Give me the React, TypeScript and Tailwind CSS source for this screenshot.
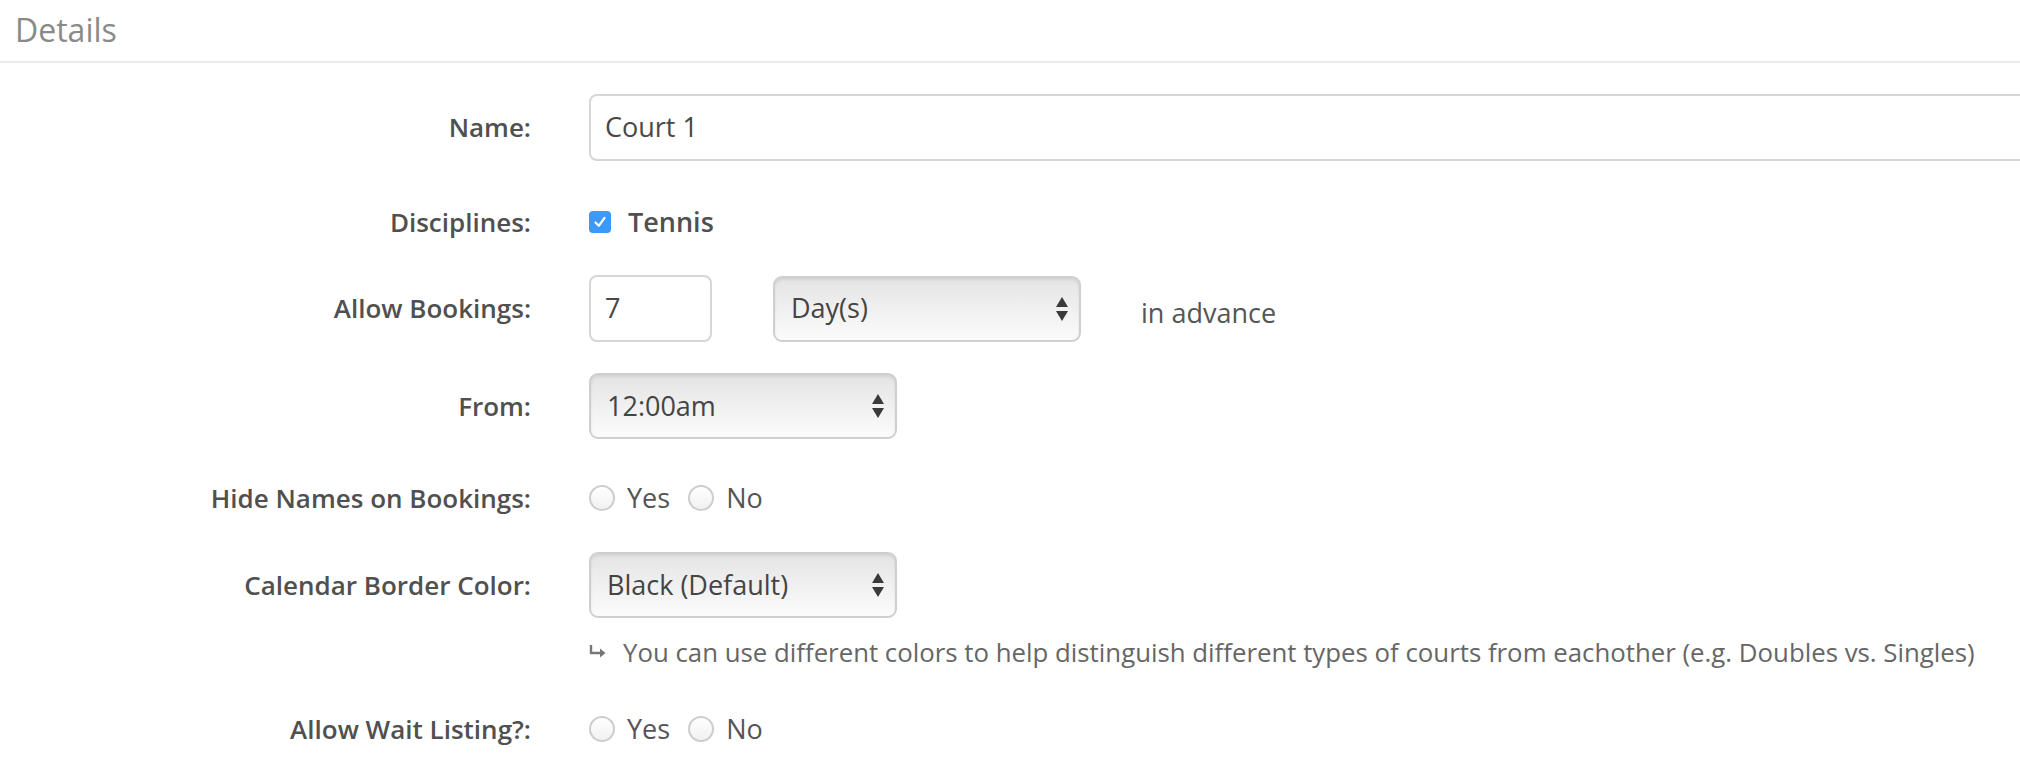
import React from "react";

const font = { fontFamily: '"Open Sans", "Liberation Sans", sans-serif' };

function Arrows() {
  return (
    <svg width="14" height="28" viewBox="0 0 14 28" className="shrink-0">
      <path d="M7 2 L13 12 L1 12 Z" fill="#3a3a3a" />
      <path d="M7 26 L13 16 L1 16 Z" fill="#3a3a3a" />
    </svg>
  );
}

function Select({ value, w }: { value: string; w: string }) {
  return (
    <div
      className={`${w} h-[66px] rounded-[9px] border-2 border-[#cfcfcf] bg-gradient-to-b from-[#e4e4e4] via-[#f0f0f0] to-[#fbfbfb] shadow-[inset_0_2px_3px_rgba(0,0,0,0.08)] flex items-center justify-between pl-[16px] pr-[10px] text-[27px] text-[#444]`}
    >
      <span>{value}</span>
      <Arrows />
    </div>
  );
}

function Radio({ label }: { label: string }) {
  return (
    <div className="flex items-center gap-[12px]">
      <div className="w-[26px] h-[26px] shrink-0 rounded-full border-2 border-[#cdcdcd] bg-gradient-to-b from-[#ffffff] to-[#f1f1f1]" />
      <span className="text-[27px] text-[#555]">{label}</span>
    </div>
  );
}

function Row({
  label,
  children,
  className = "",
}: {
  label: string;
  children: React.ReactNode;
  className?: string;
}) {
  return (
    <div className={`flex items-center ${className}`}>
      <div className="w-[531px] shrink-0 text-right font-semibold text-[26px] text-[#505050]">
        {label}
      </div>
      <div className="ml-[58px] flex items-center">{children}</div>
    </div>
  );
}

export default function App() {
  return (
    <div className="w-[2020px] h-[770px] overflow-hidden bg-white" style={font}>
      <div className="h-[63px] border-b-2 border-[#ebebeb] flex items-center pl-[15px]">
        <span className="text-[32px] text-[#8a8a8a] leading-none -mt-[2px]">Details</span>
      </div>

      <Row label="Name:" className="mt-[31px] h-[67px]">
        <div className="w-[1500px] h-[67px] rounded-[8px] border-2 border-[#d6d6d6] flex items-center pl-[14px] text-[27px] text-[#484848]">
          Court 1
        </div>
      </Row>

      <Row label="Disciplines:" className="mt-[41px] h-[40px]">
        <div className="w-[22px] h-[22px] shrink-0 rounded-[4px] bg-[#3b99fc] flex items-center justify-center">
          <svg width="16" height="16" viewBox="0 0 16 16">
            <path d="M3.5 8.5 L6.8 11.8 L12.5 3.8" stroke="#fff" strokeWidth="2.2" fill="none" strokeLinecap="round" strokeLinejoin="round" />
          </svg>
        </div>
        <span className="ml-[17px] font-semibold text-[27px] text-[#505050]">Tennis</span>
      </Row>

      <Row label="Allow Bookings:" className="mt-[33px] h-[67px]">
        <div className="w-[123px] h-[67px] rounded-[8px] border-2 border-[#d6d6d6] flex items-center pl-[14px] text-[27px] text-[#484848]">
          7
        </div>
        <div className="ml-[61px]">
          <Select value="Day(s)" w="w-[308px]" />
        </div>
        <span className="ml-[60px] mt-[9px] text-[27px] text-[#555]">in advance</span>
      </Row>

      <Row label="From:" className="mt-[31px] h-[66px]">
        <Select value="12:00am" w="w-[308px]" />
      </Row>

      <Row label="Hide Names on Bookings:" className="mt-[34px] h-[50px]">
        <Radio label="Yes" />
        <div className="ml-[18px]">
          <Radio label="No" />
        </div>
      </Row>

      <Row label="Calendar Border Color:" className="mt-[29px] h-[66px]">
        <Select value="Black (Default)" w="w-[308px]" />
      </Row>

      <div className="mt-[16px] ml-[589px] flex items-center h-[36px] text-[25.8px] text-[#666]">
        <svg width="18" height="16" viewBox="0 0 18 16" className="mr-[16px] shrink-0">
          <path d="M2 1 L2 9 L13 9" stroke="#777" strokeWidth="2.4" fill="none" />
          <path d="M11 4.5 L16.5 9 L11 13.5 Z" fill="#777" />
        </svg>
        <span>You can use different colors to help distinguish different types of courts from eachother (e.g. Doubles vs. Singles)</span>
      </div>

      <Row label="Allow Wait Listing?:" className="mt-[34px] h-[50px]">
        <Radio label="Yes" />
        <div className="ml-[18px]">
          <Radio label="No" />
        </div>
      </Row>
    </div>
  );
}
